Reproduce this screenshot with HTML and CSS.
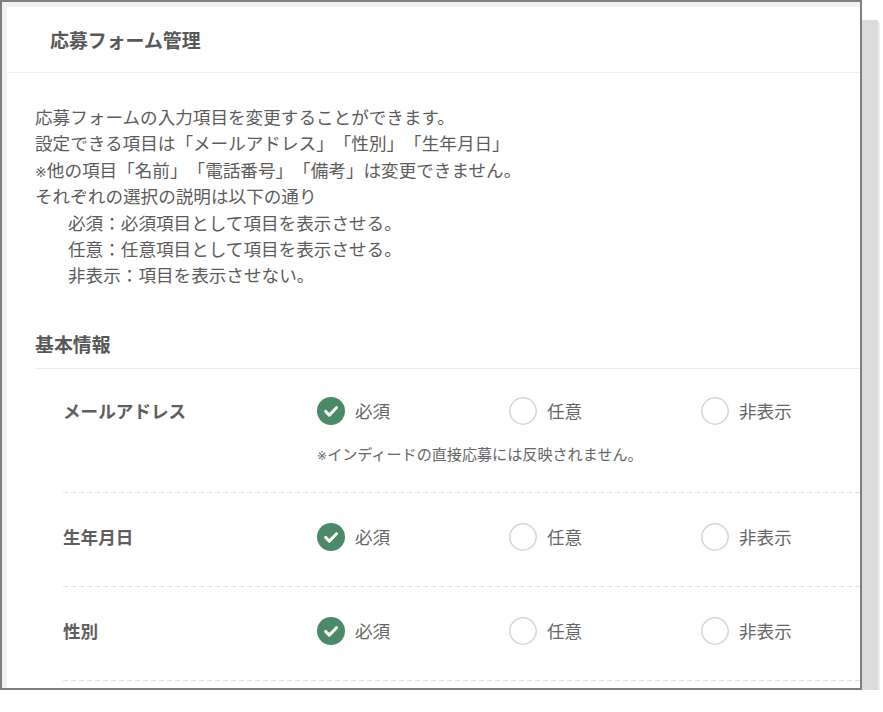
FILE: index.html
```html
<!DOCTYPE html>
<html lang="ja">
<head>
<meta charset="utf-8">
<title>応募フォーム管理</title>
<link rel="stylesheet" href="styles.css">
</head>
<body>
<div class="frame">
  <div class="card">
    <div class="card-head"><h1 class="title">応募フォーム管理</h1></div>
    <div class="card-body">
      <div class="desc">
        <p>応募フォームの入力項目を変更することができます。</p>
        <p>設定できる項目は「メールアドレス」「性別」「生年月日」</p>
        <p><span class="mark">※</span>他の項目「名前」「電話番号」「備考」は変更できません。</p>
        <p>それぞれの選択の説明は以下の通り</p>
        <p class="indent">必須：必須項目として項目を表示させる。</p>
        <p class="indent">任意：任意項目として項目を表示させる。</p>
        <p class="indent">非表示：項目を表示させない。</p>
      </div>
      <h2 class="section">基本情報</h2>

      <div class="row first">
        <div class="label">メールアドレス</div>
        <div class="field">
          <div class="options">
            <span class="opt"><svg class="radio" viewBox="0 0 28 28"><circle cx="14" cy="14" r="14" fill="#4a8a68"/><path d="M8.6 14.4l3.7 3.7 7.2-7.4" fill="none" stroke="#fff" stroke-width="3" stroke-linecap="round" stroke-linejoin="round"/></svg><span>必須</span></span>
            <span class="opt"><svg class="radio" viewBox="0 0 28 28"><circle cx="14" cy="14" r="13.2" fill="#fff" stroke="#dad6ce" stroke-width="1.5"/></svg><span>任意</span></span>
            <span class="opt"><svg class="radio" viewBox="0 0 28 28"><circle cx="14" cy="14" r="13.2" fill="#fff" stroke="#dad6ce" stroke-width="1.5"/></svg><span>非表示</span></span>
          </div>
          <p class="note"><span class="mark">※</span>インディードの直接応募には反映されません。</p>
        </div>
      </div>

      <div class="row">
        <div class="label">生年月日</div>
        <div class="field">
          <div class="options">
            <span class="opt"><svg class="radio" viewBox="0 0 28 28"><circle cx="14" cy="14" r="14" fill="#4a8a68"/><path d="M8.6 14.4l3.7 3.7 7.2-7.4" fill="none" stroke="#fff" stroke-width="3" stroke-linecap="round" stroke-linejoin="round"/></svg><span>必須</span></span>
            <span class="opt"><svg class="radio" viewBox="0 0 28 28"><circle cx="14" cy="14" r="13.2" fill="#fff" stroke="#dad6ce" stroke-width="1.5"/></svg><span>任意</span></span>
            <span class="opt"><svg class="radio" viewBox="0 0 28 28"><circle cx="14" cy="14" r="13.2" fill="#fff" stroke="#dad6ce" stroke-width="1.5"/></svg><span>非表示</span></span>
          </div>
        </div>
      </div>

      <div class="row">
        <div class="label">性別</div>
        <div class="field">
          <div class="options">
            <span class="opt"><svg class="radio" viewBox="0 0 28 28"><circle cx="14" cy="14" r="14" fill="#4a8a68"/><path d="M8.6 14.4l3.7 3.7 7.2-7.4" fill="none" stroke="#fff" stroke-width="3" stroke-linecap="round" stroke-linejoin="round"/></svg><span>必須</span></span>
            <span class="opt"><svg class="radio" viewBox="0 0 28 28"><circle cx="14" cy="14" r="13.2" fill="#fff" stroke="#dad6ce" stroke-width="1.5"/></svg><span>任意</span></span>
            <span class="opt"><svg class="radio" viewBox="0 0 28 28"><circle cx="14" cy="14" r="13.2" fill="#fff" stroke="#dad6ce" stroke-width="1.5"/></svg><span>非表示</span></span>
          </div>
        </div>
      </div>
    </div>
  </div>
</div>
</body>
</html>
```

FILE: styles.css
```css
html, body {
  margin: 0;
  padding: 0;
  background: #fff;
}
body {
  font-family: "Noto Sans CJK JP", "Noto Sans", sans-serif;
  color: #5c5c5c;
  text-spacing-trim: space-all;
}
.frame {
  width: 862px;
  height: 690px;
  box-sizing: border-box;
  border: 2px solid #7f7f7f;
  background: #f2f2f2;
  padding: 5px 0 0 5px;
  box-shadow: 18px 18px 0 -2px #dcdcdc, 20px 20px 0 -2px #ececec;
}
.card {
  background: #fff;
  height: 100%;
  overflow: hidden;
}
.card-head {
  height: 66px;
  box-sizing: border-box;
  border-bottom: 1px solid #efefef;
  display: flex;
  align-items: center;
  padding: 2px 0 0 43px;
}
.title {
  margin: 0;
  font-size: 18.9px;
  line-height: 1;
  font-weight: bold;
  color: #585858;
}
.card-body {
  padding: 31px 0 0 28px;
}
.desc {
  font-size: 17.6px;
  line-height: 26.4px;
  color: #5c5c5c;
}
.desc p {
  margin: 0;
  white-space: nowrap;
}
.desc .indent {
  padding-left: 33px;
}
.mark {
  font-family: "DejaVu Sans", sans-serif;
  font-size: 0.8em;
  line-height: 0;
}
.section {
  margin: 42px 0 0;
  font-size: 18.9px;
  line-height: 26px;
  padding-bottom: 11px;
  border-bottom: 1px solid #ebebeb;
  font-weight: bold;
  color: #585858;
}
.row {
  margin-left: 28px;
  display: grid;
  grid-template-columns: 254px 1fr;
  padding: 30px 0 36px;
  background-image: repeating-linear-gradient(to right, #e2e2e2 0 5px, transparent 5px 8px);
  background-size: 100% 1px;
  background-position: left bottom;
  background-repeat: no-repeat;
}
.row.first {
  padding-top: 28px;
  padding-bottom: 30px;
}
.label {
  font-size: 17.6px;
  line-height: 28px;
  font-weight: bold;
  color: #5e5e5e;
}
.options {
  display: flex;
  align-items: center;
  height: 28px;
}
.opt {
  flex: none;
  width: 192px;
  display: flex;
  align-items: center;
  gap: 10px;
  font-size: 17.6px;
  line-height: 28px;
  color: #666;
}
.opt:last-child {
  width: auto;
}
.radio {
  width: 28px;
  height: 28px;
  flex: none;
  display: block;
}
.note {
  margin: 18px 0 0;
  font-size: 15.1px;
  line-height: 20px;
  color: #666;
  white-space: nowrap;
}
```
